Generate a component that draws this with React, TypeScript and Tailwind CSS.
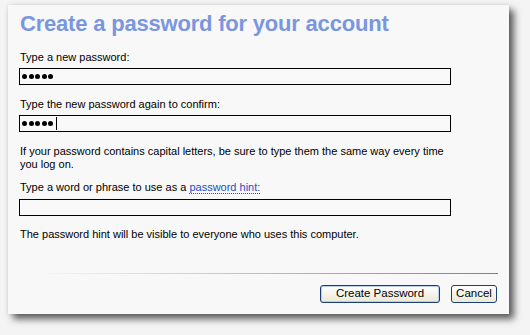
import React from "react";

function Dots({ caret }: { caret?: boolean }) {
  return (
    <div className="flex items-center gap-[1.6px] pl-[2px]">
      {[0, 1, 2, 3, 4].map((i) => (
        <span key={i} className="block w-[5px] h-[5px] rounded-full bg-black" />
      ))}
      {caret && <span className="block w-[1px] h-[13px] bg-black ml-[1px]" />}
    </div>
  );
}

function Field({ children }: { children?: React.ReactNode }) {
  return (
    <div className="ml-[11px] w-[432px] h-[17px] border border-black bg-[#f9f9f9] flex items-center">
      {children}
    </div>
  );
}

export default function App() {
  const body = { fontFamily: '"Liberation Sans", Arial, sans-serif' };
  return (
    <div className="w-[530px] h-[335px] bg-[#f4f4f4] pt-[5px] pl-[8px]" style={body}>
      <div className="w-[501px] h-[309px] bg-[#f8f8f8] flex flex-col text-[11px] leading-[13px] text-black shadow-[5px_5px_7px_rgba(0,0,0,0.62),0_0_4px_rgba(0,0,0,0.12)]">
        <div className="mt-[6px] ml-[12px] text-[22px] leading-[25px] text-[#7a96df] font-bold tracking-[-0.2px]">
          Create a password for your account
        </div>
        <div className="mt-[15px] ml-[12px]">Type a new password:</div>
        <div className="mt-[4px]">
          <Field>
            <Dots />
          </Field>
        </div>
        <div className="mt-[13px] ml-[12px]">Type the new password again to confirm:</div>
        <div className="mt-[4px]">
          <Field>
            <Dots caret />
          </Field>
        </div>
        <div className="mt-[13px] ml-[12px] w-[430px]">
          If your password contains capital letters, be sure to type them the same way every time you log on.
        </div>
        <div className="mt-[10px] ml-[12px]">
          Type a word or phrase to use as a{" "}
          <span className="text-[#1c4fc4] border-b border-dotted border-[#1c4fc4]">password hint:</span>
        </div>
        <div className="mt-[5px]">
          <Field />
        </div>
        <div className="mt-[12px] ml-[12px]">The password hint will be visible to everyone who uses this computer.</div>
        <div className="mt-[32px] ml-[29px] w-[461px] h-[1px] bg-gradient-to-r from-[#f8f8f8] via-[#a9bde9] to-[#5a82d6]" />
        <div className="mt-[11px] flex justify-end gap-[11px] pr-[12px]">
          <button className="w-[120px] h-[18px] rounded-[3px] border border-[#1c3f74] bg-gradient-to-b from-white to-[#ece9d8] text-[11.5px] leading-none text-black shadow-[inset_0_0_0_1px_#b6cdf0]">
            Create Password
          </button>
          <button className="w-[46px] h-[18px] rounded-[3px] border border-[#1c3f74] bg-gradient-to-b from-white to-[#ece9d8] text-[11.5px] leading-none text-black">
            Cancel
          </button>
        </div>
      </div>
    </div>
  );
}
